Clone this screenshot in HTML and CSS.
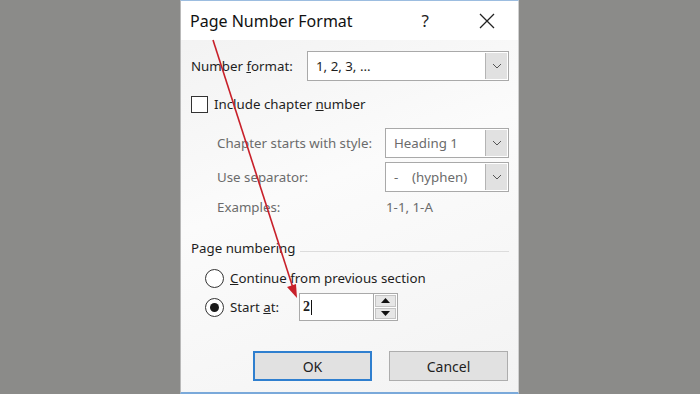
FILE: index.html
```html
<!DOCTYPE html>
<html lang="en">
<head>
    <meta charset="UTF-8">
    <meta name="viewport" content="width=device-width, initial-scale=1.0">
    <title>Page Number Format</title>
    <link rel="stylesheet" href="styles.css">
</head>
<body>
    <div class="dialog">
        <div class="titlebar">
            <span class="title">Page Number Format</span>
            <span class="help">?</span>
            <svg class="close" width="16" height="16" viewBox="0 0 16 16">
                <path d="M1 1 L15 15 M15 1 L1 15" stroke="#222" stroke-width="1.3" fill="none"/>
            </svg>
        </div>
        <div class="content">
            <div class="row row-format">
                <span class="label">Number <u>f</u>ormat:</span>
                <div class="select wide">
                    <span class="value">1, 2, 3, ...</span>
                    <span class="drop"><svg width="10" height="6" viewBox="0 0 10 6"><path d="M1 1 L5 5 L9 1" stroke="#555" fill="none"/></svg></span>
                </div>
            </div>
            <div class="row row-check">
                <span class="checkbox"></span>
                <span class="label">Include chapter <u>n</u>umber</span>
            </div>
            <div class="row row-sub row-style">
                <span class="label dim">Chapter starts with style:</span>
                <div class="select narrow">
                    <span class="value dim">Heading 1</span>
                    <span class="drop"><svg width="10" height="6" viewBox="0 0 10 6"><path d="M1 1 L5 5 L9 1" stroke="#555" fill="none"/></svg></span>
                </div>
            </div>
            <div class="row row-sub row-sep">
                <span class="label dim">Use separator:</span>
                <div class="select narrow">
                    <span class="value dim">-&nbsp;&nbsp;&nbsp;&nbsp;(hyphen)</span>
                    <span class="drop"><svg width="10" height="6" viewBox="0 0 10 6"><path d="M1 1 L5 5 L9 1" stroke="#555" fill="none"/></svg></span>
                </div>
            </div>
            <div class="row row-sub row-examples">
                <span class="label dim">Examples:</span>
                <span class="example dim">1-1, 1-A</span>
            </div>
            <div class="row group-title">
                <span class="label">Page numbering</span>
                <span class="rule"></span>
            </div>
            <div class="row row-radio">
                <span class="radio"></span>
                <span class="label"><u>C</u>ontinue from previous section</span>
            </div>
            <div class="row row-radio row-start">
                <span class="radio checked"></span>
                <span class="label start-label">Start <u>a</u>t:</span>
                <div class="spin-input">
                    <span class="spin-value">2</span><span class="caret"></span>
                </div>
                <div class="spinner">
                    <span class="spin-btn"><svg width="9" height="5" viewBox="0 0 9 5"><path d="M0 5 L4.5 0 L9 5 Z" fill="#111"/></svg></span>
                    <span class="spin-btn"><svg width="9" height="5" viewBox="0 0 9 5"><path d="M0 0 L4.5 5 L9 0 Z" fill="#111"/></svg></span>
                </div>
            </div>
            <div class="buttons">
                <button class="btn default">OK</button>
                <button class="btn">Cancel</button>
            </div>
        </div>
    </div>

    <!-- red annotation arrow drawn over the dialog -->
    <svg class="arrow" width="700" height="394" viewBox="0 0 700 394">
        <line x1="213" y1="40" x2="293" y2="288" stroke="#c8202a" stroke-width="1.6"/>
        <path d="M297 298 L287 287 L296 284 Z" fill="#c8202a"/>
    </svg>
</body>
</html>
```

FILE: styles.css
```css
body {
    margin: 0;
    width: 700px;
    height: 394px;
    background: #8b8b89;
    font-family: "Noto Sans", "Open Sans", sans-serif;
    font-size: 13.3px;
    color: #1e1e1e;
    position: relative;
    overflow: hidden;
}
.dialog {
    margin-left: 180px;
    width: 337px;
    height: 391px;
    border-left: 1px solid #b9b9b9;
    border-right: 1px solid #d0d0d0;
    border-top: 1px solid #9cbde0;
    border-bottom: 2px solid #7aa9da;
    background: linear-gradient(160deg, #f1f1f1 0%, #fbfbfb 45%, #f3f3f3 100%);
}
.titlebar {
    height: 39px;
    background: #fff;
    display: flex;
    align-items: center;
    padding-left: 9px;
}
.title {
    font-size: 16px;
    flex: 1;
    color: #111;
}
.help {
    font-size: 17px;
    margin-right: 50px;
    color: #222;
}
.close {
    margin-right: 23px;
}
.content {
    padding: 0 9px 0 10px;
}
.row {
    display: flex;
    align-items: center;
}
.row > * {
    flex-shrink: 0;
}
.row-format {
    margin-top: 11px;
    height: 30px;
}
.row-format .label {
    width: 116px;
}
.select {
    height: 28px;
    background: #fff;
    border: 1px solid #a9a9a9;
    display: flex;
    align-items: center;
}
.select .value {
    flex: 1;
    padding-left: 8px;
}
.select.wide {
    width: 200px;
}
.select.narrow {
    width: 122px;
}
.drop {
    width: 21px;
    height: 26px;
    margin-right: 1px;
    background: #e1e1e1;
    border-left: 1px solid #b4b4b4;
    display: flex;
    align-items: center;
    justify-content: center;
}
.row-check {
    margin-top: 13px;
    height: 20px;
}
.checkbox {
    width: 15px;
    height: 15px;
    border: 1px solid #333;
    background: #fff;
    margin-right: 6px;
}
.row-sub {
    padding-left: 26px;
}
.row-sub .label {
    width: 168px;
}
.row-style {
    margin-top: 14px;
    height: 30px;
}
.row-sep {
    margin-top: 4px;
    height: 30px;
}
.row-examples {
    margin-top: 4px;
    height: 22px;
}
.example {
    padding-left: 1px;
}
.dim {
    color: #6b6b6b;
}
.group-title {
    margin-top: 19px;
    height: 22px;
}
.group-title .rule {
    flex: 1;
    flex-shrink: 1;
    height: 1px;
    background: #dcdcdc;
    margin-left: 4px;
    margin-top: 6px;
}
.row-radio {
    padding-left: 14px;
}
.row-radio .label {
    margin-left: 6px;
}
.group-title + .row-radio {
    margin-top: 8px;
    height: 22px;
}
.radio {
    width: 17px;
    height: 17px;
    border: 1px solid #333;
    border-radius: 50%;
    background: #fff;
    display: flex;
    align-items: center;
    justify-content: center;
}
.radio.checked::after {
    content: "";
    width: 9px;
    height: 9px;
    border-radius: 50%;
    background: #1a1a1a;
}
.row-start {
    margin-top: 4px;
    height: 28px;
}
.start-label {
    width: 69px;
}
.spin-input {
    border: 1px solid #a9a9a9;
    background: #fff;
    display: flex;
    align-items: center;
    padding-left: 3px;
    box-sizing: border-box;
    width: 75px;
    height: 28px;
}
.spin-value {
    font-family: "Liberation Serif", serif;
    font-weight: bold;
    font-size: 14px;
}
.caret {
    width: 1px;
    height: 15px;
    background: #111;
    margin-left: 1px;
}
.spinner {
    border: 1px solid #a9a9a9;
    border-left: none;
    background: #fff;
    display: flex;
    flex-direction: column;
    justify-content: space-between;
    padding: 1px;
    height: 24px;
    width: 21px;
}
.spin-btn {
    flex: 1;
    background: #e6e6e6;
    border: 1px solid #c4c4c4;
    display: flex;
    align-items: center;
    justify-content: center;
}
.spin-btn + .spin-btn {
    margin-top: 1px;
}
.buttons {
    display: flex;
    justify-content: flex-end;
    gap: 17px;
    margin-top: 30px;
    padding-right: 1px;
}
.btn {
    width: 119px;
    height: 30px;
    background: #e1e1e1;
    border: 1px solid #adadad;
    font-family: "Noto Sans", "Open Sans", sans-serif;
    font-size: 14px;
    color: #1e1e1e;
    padding: 0;
}
.btn.default {
    border: 2px solid #2f7fcf;
}
.arrow {
    position: absolute;
    left: 0;
    top: 0;
    pointer-events: none;
}
```
